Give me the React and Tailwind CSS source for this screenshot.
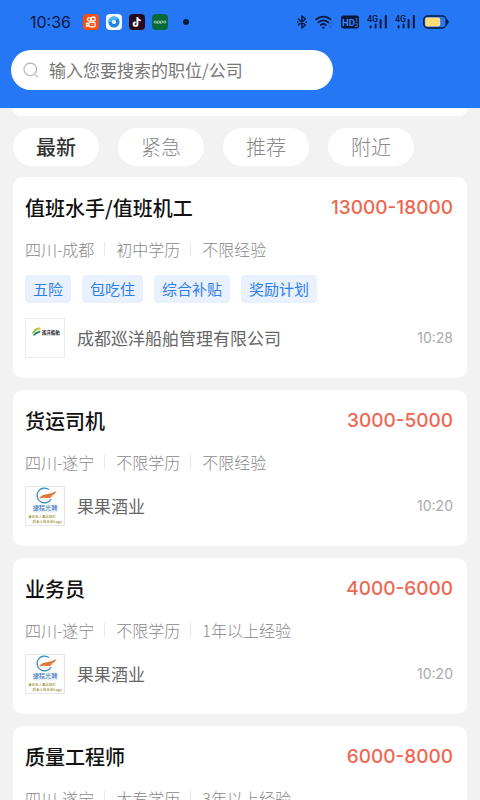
import React, { useState } from 'react';

const TABS = ['最新', '紧急', '推荐', '附近'];

const JOBS = [
  {
    id: 1,
    title: '值班水手/值班机工',
    salary: '13000-18000',
    meta: ['四川-成都', '初中学历', '不限经验'],
    tags: ['五险', '包吃住', '综合补贴', '奖励计划'],
    company: '成都巡洋船舶管理有限公司',
    logo: 'ship',
    time: '10:28'
  },
  {
    id: 2,
    title: '货运司机',
    salary: '3000-5000',
    meta: ['四川-遂宁', '不限学历', '不限经验'],
    tags: [],
    company: '果果酒业',
    logo: 'default',
    time: '10:20'
  },
  {
    id: 3,
    title: '业务员',
    salary: '4000-6000',
    meta: ['四川-遂宁', '不限学历', '1年以上经验'],
    tags: [],
    company: '果果酒业',
    logo: 'default',
    time: '10:20'
  },
  {
    id: 4,
    title: '质量工程师',
    salary: '6000-8000',
    meta: ['四川-遂宁', '大专学历', '3年以上经验'],
    tags: [],
    company: '果果酒业',
    logo: 'default',
    time: '10:20'
  }
];

// Small app icons shown next to the clock
function AppIcons() {
  return (
    <div className="flex items-center gap-[7px]">
      <svg className="size-4" viewBox="0 0 16 16" aria-hidden="true">
        <rect width="16" height="16" rx="4" fill="#fb4f0c" />
        <g fill="none" stroke="#fff" strokeWidth="1.3">
          <circle cx="6.2" cy="5.4" r="1.7" />
          <circle cx="10.2" cy="5" r="2" />
          <rect x="5.8" y="8.4" width="6.4" height="4.4" rx="1.4" />
          <path d="M5.8 10 3.6 9v3.4l2.2-1" strokeLinejoin="round" />
        </g>
        <circle cx="9" cy="10.6" r="0.6" fill="#fff" />
      </svg>
      <svg className="size-4" viewBox="0 0 16 16" aria-hidden="true">
        <rect width="16" height="16" rx="4" fill="#f6faff" />
        <circle cx="8" cy="8" r="5.6" fill="#1c86e0" />
        <path d="M2.4 8a5.6 5.6 0 0 1 9.4-4.1L8 8z" fill="#46b4f3" />
        <circle cx="8" cy="8" r="2.1" fill="#fff" />
        <circle cx="8.2" cy="8" r="0.7" fill="#8cc4f5" />
      </svg>
      <svg className="size-4" viewBox="0 0 16 16" aria-hidden="true">
        <rect width="16" height="16" rx="4" fill="#26081f" />
        <g fill="none" strokeWidth="1.6">
          <path d="M8.1 3v6.9a1.9 1.9 0 1 1-1.9-1.9M8.1 3.4c.2 1.7 1.5 2.7 3.2 2.8" stroke="#27e5e0" />
          <path d="M8.9 3.5v6.9A1.9 1.9 0 1 1 7 8.5M8.9 3.9c.2 1.7 1.5 2.7 3.2 2.8" stroke="#f4305d" />
          <path d="M8.5 3.2v6.9a1.9 1.9 0 1 1-1.9-1.9M8.5 3.6c.2 1.7 1.5 2.7 3.2 2.8" stroke="#fff" strokeWidth="1.4" />
        </g>
      </svg>
      <svg className="size-4" viewBox="0 0 16 16" aria-hidden="true">
        <rect width="16" height="16" rx="4" fill="#076b39" />
        <g fill="none" stroke="#c9e5d2" strokeWidth="0.7">
          <ellipse cx="3.3" cy="8" rx="1.3" ry="1" />
          <ellipse cx="6.4" cy="8" rx="1.3" ry="1" />
          <ellipse cx="9.5" cy="8" rx="1.3" ry="1" />
          <ellipse cx="12.7" cy="8" rx="1.3" ry="1" />
          <path d="M5.1 8v1.9M8.2 8v1.9" />
        </g>
      </svg>
    </div>
  );
}

function Signal() {
  return (
    <svg className="h-4 w-5" viewBox="0 0 20 16" aria-hidden="true">
      <text x="0" y="7.6" fontSize="9" fontWeight="500" fontFamily="Roboto, sans-serif" fill="#071a3c">4G</text>
      <g stroke="#071a3c" strokeWidth="2" strokeLinecap="round">
        <path d="M3.6 12.2v1.4M8.6 10.6v3M13.6 6v7.6M18.800 2v11.6" />
      </g>
    </svg>
  );
}

function StatusIcons() {
  return (
    <div className="flex items-center gap-2">
      <svg className="h-4 w-2.5" viewBox="0 0 10 16" fill="none" stroke="#071a3c" strokeWidth="1.5" strokeLinejoin="round" aria-hidden="true">
        <path d="M1 4.8 8.4 11 5 14V2l3.400 3L1 11.200" />
        <path d="M.6 8h.6M9 8h.6" strokeLinecap="round" />
      </svg>
      <svg className="h-4 w-[18px]" viewBox="0 0 18 16" fill="none" stroke="#071a3c" strokeWidth="1.8" strokeLinecap="round" aria-hidden="true">
        <path d="M1 5.4a11 11 0 0 1 14.6 0M3.4 8.3a7.4 7.4 0 0 1 9.8 0M5.8 11a3.800 3.800 0 0 1 5 0" />
        <circle cx="8.3" cy="13.6" r="1.2" fill="#071a3c" stroke="none" />
        <path d="m14 10 1.4-1.600L16.800 10M14 12l1.400 1.600 1.400-1.600" stroke="#1d5cc4" strokeWidth="1" />
      </svg>
      <svg className="h-4 w-[18px]" viewBox="0 0 18 16" aria-hidden="true">
        <rect y="1.4" width="18" height="13.2" rx="2.4" fill="#071a3c" />
        <text x="1" y="11.600" fontSize="9.500" fontWeight="700" fontFamily="Roboto, sans-serif" fill="#3f86f7">HD</text>
        <text x="14" y="7.600" fontSize="5.500" fontWeight="700" fontFamily="Roboto, sans-serif" fill="#3f86f7">1</text>
        <text x="14" y="12.800" fontSize="5.500" fontWeight="700" fontFamily="Roboto, sans-serif" fill="#3f86f7">2</text>
      </svg>
      <Signal />
      <Signal />
      <svg className="h-4 w-[26px]" viewBox="0 0 26 16" aria-hidden="true">
        <rect x="0.800" y="2" width="22.400" height="12" rx="4" fill="none" stroke="#071a3c" strokeWidth="1.400" />
        <rect x="2.200" y="3.400" width="15" height="9.200" rx="2" fill="#ffdd78" />
        <path d="M24 5.800c1.600.6 1.600 3.800 0 4.400z" fill="#071a3c" stroke="#071a3c" />
      </svg>
    </div>
  );
}

function CompanyLogo({ type }) {
  if (type === 'ship') {
    return (
      <svg className="size-10 shrink-0 border border-[#e9ecf1]" viewBox="1 1 38 38" role="img" aria-label="巡洋船舶">
        <path d="M7 16c1-4 4-6.500 8-6.500-2 1.500-4 2.500-5 5z" fill="#8cc53f" />
        <path d="M8 17.500c1.500-3 4-4.500 7.500-4.500l-1 2c-2 0-3.500 1-4.500 2.500z" fill="#1c7d6c" />
        <path d="M12 11.500c1.500-1.500 3-2 4-1.500l-1.500 2.500z" fill="#f2c230" />
        <text x="16.800" y="15.800" fontSize="4.500" fontWeight="700" fontFamily="'Noto Sans CJK SC', sans-serif" fill="#222">巡洋船舶</text>
        <path d="M17 17.400h17.400" stroke="#bbb" strokeWidth="0.8" strokeDasharray="1.200 0.500" />
      </svg>
    );
  }
  return (
    <svg className="size-10 shrink-0 border border-[#e6e6e6]" viewBox="1 1 38 38" role="img" aria-label="捷程光聘">
      <path d="M24 3.600A7.400 7.400 0 1 0 26 13" fill="none" stroke="#2b86bd" strokeWidth="1.200" />
      <path d="M14 12.500c2-3.500 5-4 9-4.600 3-.5 5-1.200 8.500-2.900-1.500 3-3.500 4.500-6 5.200 1 0 1.500.2 2 .1-2.500 2.400-5 1.700-8 1.500-2 0-3.500.3-5.500.7z" fill="#e2793a" />
      <text x="20" y="24.400" textAnchor="middle" fontSize="6.200" fontWeight="500" fontFamily="'Noto Sans CJK SC', sans-serif" fill="#3e7db8">捷程光聘</text>
      <path d="M8 25.800h24" stroke="#a9c7df" strokeWidth="0.600" strokeDasharray="1 0.500" />
      <text x="3" y="32.400" fontSize="3.500" fontWeight="500" fontFamily="'Noto Sans CJK SC', sans-serif" fill="#8f8a22">该企业人事比较忙</text>
      <text x="7.500" y="37.200" fontSize="3.500" fontWeight="500" fontFamily="'Noto Sans CJK SC', sans-serif" fill="#8f8a22">尚未上传企业Logo</text>
    </svg>
  );
}

function JobCard({ job }) {
  return (
    <article className="rounded-[10px] bg-white px-3 pt-4 pb-5">
      <div className="flex items-center justify-between pr-0.5">
        <h2 className="text-[20px] leading-[30px] font-medium text-[#111]">{job.title}</h2>
        <span className="font-['Inter'] text-[19px] leading-[30px] font-medium text-[#ef6650]">{job.salary}</span>
      </div>
      <ul className="mt-3.5 flex items-center text-[16px] leading-6 font-light text-[#888]">
        {job.meta.map((item, idx) => (
          <li key={item} className="flex items-center">
            {idx > 0 && <span className="mr-[11px] ml-2.5 h-3.5 w-px bg-[#e8e8e8]"></span>}
            {item}
          </li>
        ))}
      </ul>
      {job.tags.length > 0 && (
        <ul className="mt-3.5 mb-[15px] flex flex-wrap gap-[11px]">
          {job.tags.map((tag) => (
            <li key={tag} className="rounded bg-[#e9f0fe] px-2 text-[15px] leading-7 text-[#2f7fe8]">
              {tag}
            </li>
          ))}
        </ul>
      )}
      <div className={`flex items-center pr-0.5 ${job.tags.length > 0 ? '' : 'mt-3'}`}>
        <CompanyLogo type={job.logo} />
        <span className="ml-3 flex-1 text-[17px] leading-6 text-[#666]">{job.company}</span>
        <time className="font-['Inter'] text-[14px] leading-5 text-[#aaa]">{job.time}</time>
      </div>
    </article>
  );
}

export default function App() {
  const [activeTab, setActiveTab] = useState(TABS[0]);
  const [keyword, setKeyword] = useState('');

  return (
    <div lang="zh-CN" className="flex h-screen flex-col bg-[#f2f2f2] font-['Noto_Sans_CJK_SC',sans-serif]">
      <header className="shrink-0 bg-[#2577f6] pt-2.5 pb-[18px]">
        {/* Status bar */}
        <div className="flex h-6 items-center justify-between pr-[31px] pl-[30px]">
          <div className="flex items-center">
            <span className="mr-3 font-['Inter'] text-[16px] leading-6 text-[#071a3c]">10:36</span>
            <AppIcons />
            <span className="ml-[15px] size-1.5 rounded-full bg-[#071a3c]"></span>
          </div>
          <StatusIcons />
        </div>
        {/* Search */}
        <label className="mt-4 ml-[11px] flex h-10 w-[67%] items-center rounded-full bg-white pr-4 pl-3">
          <svg className="size-4 shrink-0" viewBox="0 0 16 16" fill="none" stroke="#bbb" strokeWidth="1.3" strokeLinecap="round" aria-hidden="true">
            <circle cx="7.3" cy="7.3" r="6.3" />
            <path d="m12.800 13.200 1.700 1.700" />
          </svg>
          <input
            type="text"
            value={keyword}
            onChange={(e) => setKeyword(e.target.value)}
            aria-label="搜索职位或公司"
            placeholder="输入您要搜索的职位/公司"
            className="ml-2.5 min-w-0 flex-1 bg-transparent text-[17px] leading-6 text-[#333] outline-none placeholder:text-[#777]"
          />
        </label>
      </header>

      <main className="min-h-0 flex-1 overflow-y-auto px-[13px] [scrollbar-width:none]">
        {/* Bottom edge of the banner scrolled under the header */}
        <div className="h-2 rounded-b-[10px] bg-white"></div>
        <nav className="mt-3 flex gap-[19px]">
          {TABS.map((tab) => (
            <button
              key={tab}
              type="button"
              onClick={() => setActiveTab(tab)}
              aria-pressed={activeTab === tab}
              className={`h-[38px] w-[86px] rounded-full bg-white text-[20px] leading-[30px] ${
                activeTab === tab ? 'font-medium text-[#333]' : 'font-light text-[#888]'
              }`}
            >
              {tab}
            </button>
          ))}
        </nav>
        <div className="mt-[11px] flex flex-col gap-3 pb-3">
          {JOBS.map((job) => (
            <JobCard key={job.id} job={job} />
          ))}
        </div>
      </main>
    </div>
  );
}
